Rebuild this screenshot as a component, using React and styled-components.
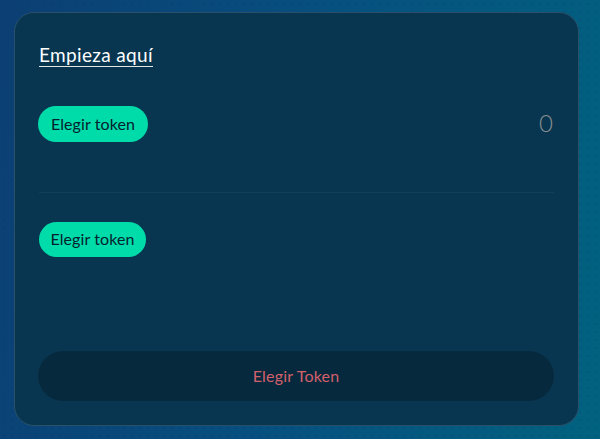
import styled, { createGlobalStyle } from "styled-components";

const GlobalStyle = createGlobalStyle`
  html, body {
    margin: 0;
    padding: 0;
  }
  body {
    font-family: Lato, "Open Sans", sans-serif;
  }
`;

const Page = styled.div`
  width: 600px;
  height: 439px;
  box-sizing: border-box;
  padding: 12px 21px 13px 14px;
  overflow: hidden;
  background-color: #06507f;
  background-image:
    radial-gradient(circle, rgba(10, 40, 110, 0.16) 1px, transparent 1.6px),
    linear-gradient(100deg, #0c3f73 0%, #06507f 50%, #01627f 100%);
  background-size: 8px 8px, 100% 100%;
`;

const Card = styled.main`
  height: 100%;
  box-sizing: border-box;
  display: flex;
  flex-direction: column;
  padding: 32px 24px 24px 23px;
  background: #083651;
  border: 1px solid #2a5068;
  border-radius: 20px;
`;

const Title = styled.h1`
  align-self: flex-start;
  margin: 0 0 39px 1px;
  height: 21px;
  color: #ffffff;
  font-size: 19px;
  font-weight: 400;
  line-height: 20px;
  letter-spacing: 0.35px;
  border-bottom: 1px solid #e6e6e6;
`;

const TokenRow = styled.div`
  display: flex;
  align-items: center;
  justify-content: space-between;
  padding-left: ${(p) => p.$inset || 0}px;
`;

const TokenButton = styled.button`
  width: ${(p) => p.$width}px;
  height: ${(p) => p.$height}px;
  padding: 0 0 2px;
  border: 0;
  border-radius: 18px;
  background: #00dbaa;
  color: #04222d;
  font-family: inherit;
  font-size: 16px;
  font-weight: 400;
  letter-spacing: 0.1px;
`;

const Amount = styled.span`
  margin-right: 1px;
  padding-bottom: 3px;
  color: #8a8d8e;
  font-size: 24px;
  font-weight: 300;
  line-height: 24px;
`;

const Divider = styled.hr`
  margin: 50px 0 29px 1px;
  border: 0;
  border-top: 1px solid #11405a;
`;

const SubmitButton = styled.button`
  margin-top: auto;
  height: 50px;
  padding: 0 0 2px;
  border: 0;
  border-radius: 25px;
  background: #06293e;
  color: #d2606a;
  font-family: inherit;
  font-size: 16px;
  font-weight: 400;
  letter-spacing: 0.2px;
`;

export default function App() {
  return (
    <>
      <GlobalStyle />
      <Page>
        <Card>
          <Title>Empieza aquí</Title>
          <TokenRow>
            <TokenButton $width={110} $height={36}>Elegir token</TokenButton>
            <Amount>0</Amount>
          </TokenRow>
          <Divider />
          <TokenRow $inset={1}>
            <TokenButton $width={107} $height={35}>Elegir token</TokenButton>
          </TokenRow>
          <SubmitButton>Elegir Token</SubmitButton>
        </Card>
      </Page>
    </>
  );
}
